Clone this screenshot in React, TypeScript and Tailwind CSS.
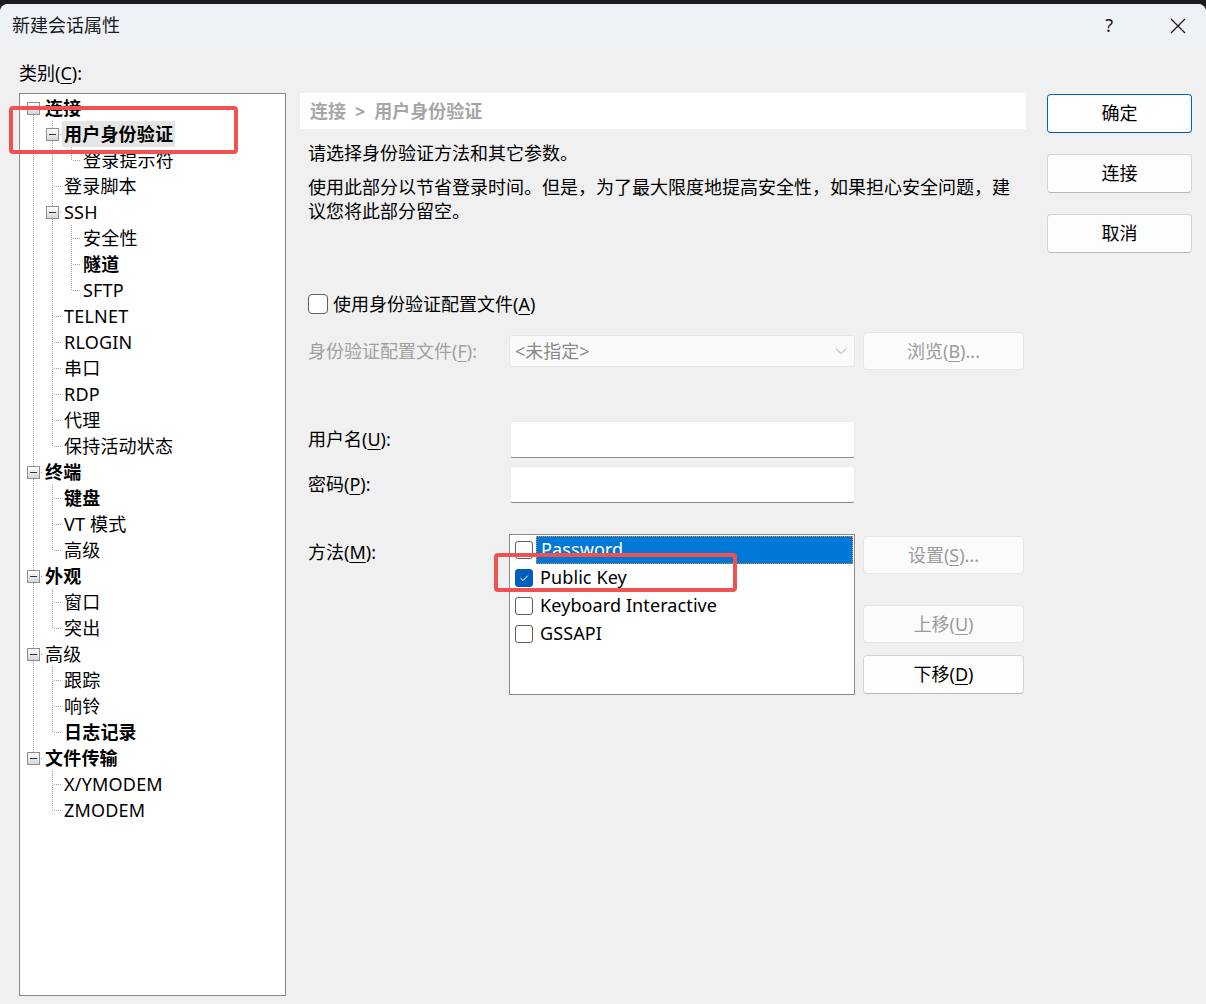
import React from 'react';

type Node = { label: string; level: number; bold?: boolean; kids?: boolean; selected?: boolean };

const tree: Node[] = [
  { label: '连接', level: 0, bold: true, kids: true },
  { label: '用户身份验证', level: 1, bold: true, kids: true, selected: true },
  { label: '登录提示符', level: 2 },
  { label: '登录脚本', level: 1 },
  { label: 'SSH', level: 1, kids: true },
  { label: '安全性', level: 2 },
  { label: '隧道', level: 2, bold: true },
  { label: 'SFTP', level: 2 },
  { label: 'TELNET', level: 1 },
  { label: 'RLOGIN', level: 1 },
  { label: '串口', level: 1 },
  { label: 'RDP', level: 1 },
  { label: '代理', level: 1 },
  { label: '保持活动状态', level: 1 },
  { label: '终端', level: 0, bold: true, kids: true },
  { label: '键盘', level: 1, bold: true },
  { label: 'VT 模式', level: 1 },
  { label: '高级', level: 1 },
  { label: '外观', level: 0, bold: true, kids: true },
  { label: '窗口', level: 1 },
  { label: '突出', level: 1 },
  { label: '高级', level: 0, kids: true },
  { label: '跟踪', level: 1 },
  { label: '响铃', level: 1 },
  { label: '日志记录', level: 1, bold: true },
  { label: '文件传输', level: 0, bold: true, kids: true },
  { label: 'X/YMODEM', level: 1 },
  { label: 'ZMODEM', level: 1 },
];

function hasNext(i: number) {
  const l = tree[i].level;
  for (let j = i + 1; j < tree.length; j++) {
    if (tree[j].level < l) return false;
    if (tree[j].level === l) return true;
  }
  return false;
}

function ancestorHasNext(i: number, k: number) {
  for (let j = i - 1; j >= 0; j--) {
    if (tree[j].level === k) return hasNext(j);
  }
  return false;
}

const DOT = { stroke: '#a0a0a0', strokeWidth: 1, strokeDasharray: '1 1' };

function Guide({ pipe }: { pipe: boolean }) {
  return (
    <svg width="19" height="26" className="shrink-0">
      {pipe && <line x1="9.5" y1="0" x2="9.5" y2="26" {...DOT} />}
    </svg>
  );
}

function Joint({ top, bottom, kids }: { top: boolean; bottom: boolean; kids?: boolean }) {
  const y1 = top ? 0 : 14;
  const y2 = bottom ? 26 : 13;
  return (
    <svg width="19" height="26" className="shrink-0">
      <defs>
        <linearGradient id="exp" x1="0" y1="0" x2="0" y2="1">
          <stop offset="0" stopColor="#ffffff" />
          <stop offset="1" stopColor="#d4d4d4" />
        </linearGradient>
      </defs>
      {(top || bottom) && <line x1="9.5" y1={y1} x2="9.5" y2={y2} {...DOT} />}
      <line x1="11" y1="13.5" x2="19" y2="13.5" {...DOT} />
      {kids && (
        <>
          <rect x="3.5" y="7.5" width="12" height="12" fill="url(#exp)" stroke="#8e8f8f" />
          <line x1="6" y1="13.5" x2="13" y2="13.5" stroke="#23344f" strokeWidth="1" />
        </>
      )}
    </svg>
  );
}

function Tree() {
  return (
    <div className="h-[903px] w-[267px] border border-[#828790] bg-white pl-[4px] pt-[1px]">
      {tree.map((n, i) => {
        const guides = [];
        for (let k = 0; k < n.level; k++) guides.push(<Guide key={k} pipe={ancestorHasNext(i, k)} />);
        return (
          <div key={i} className="flex h-[26px] items-center">
            {guides}
            <Joint top={!(n.level === 0 && i === 0)} bottom={hasNext(i)} kids={n.kids} />
            <span
              className={
                'h-[26px] px-[2px] leading-[26px] whitespace-nowrap tracking-[0.2px] ' +
                (n.bold ? 'font-bold ' : '') +
                (n.selected ? 'bg-[#e5e5e5]' : '')
              }
            >
              {n.label}
            </span>
          </div>
        );
      })}
    </div>
  );
}

function Check({ checked, big }: { checked?: boolean; big?: boolean }) {
  const size = big ? 'w-[20px] h-[20px] rounded-[4px]' : 'w-[18px] h-[18px] rounded-[3px]';
  return (
    <div
      className={
        'flex shrink-0 items-center justify-center border ' +
        size +
        (checked ? ' border-[#005fb8] bg-[#005fb8]' : ' border-[#5f5f5f] bg-white')
      }
    >
      {checked && (
        <svg width="12" height="12" viewBox="0 0 12 12">
          <path d="M2.5 6.2 L5 8.6 L9.8 3.6" fill="none" stroke="#fff" strokeWidth="1" />
        </svg>
      )}
    </div>
  );
}

function Btn({
  children,
  kind = 'normal',
  className = '',
}: {
  children: React.ReactNode;
  kind?: 'normal' | 'primary' | 'disabled';
  className?: string;
}) {
  const styles = {
    normal: 'bg-[#fdfdfd] border-[#d4d4d4] border-b-[#b8b8b8] text-black',
    primary: 'bg-white border-[#0067c0] border-b-[#0054a6] text-black',
    disabled: 'bg-[#fbfbfb] border-[#e6e6e6] text-[#9b9b9b]',
  }[kind];
  return (
    <div className={'flex items-center justify-center rounded-[4px] border ' + styles + ' ' + className}>
      {children}
    </div>
  );
}

const U = ({ c }: { c: string }) => <span className="underline underline-offset-[3px] decoration-1">{c}</span>;

export default function App() {
  return (
    <div className="h-[1004px] w-[1206px] overflow-hidden bg-[#1c1c1c] pt-[4px] font-['Noto_Sans','Noto_Sans_CJK_SC',sans-serif] text-[18px] text-black">
      <div className="relative h-[1000px] rounded-t-[8px] bg-[#f0f0f0]">
        {/* Title bar */}
        <div className="flex h-[44px] items-center justify-between rounded-t-[8px] bg-[#eef2f7] pb-[1px] pl-[12px]">
          <span className="text-[#1a1a1a]">新建会话属性</span>
          <div className="flex items-center pr-[20px]">
            <span className="text-[#1a1a1a]">?</span>
            <svg width="16" height="16" viewBox="0 0 16 16" className="ml-[57px]">
              <path d="M1 1 L15 15 M15 1 L1 15" stroke="#1a1a1a" strokeWidth="1.3" />
            </svg>
          </div>
        </div>

        {/* Body */}
        <div className="flex pl-[19px] pt-[13px]">
          <div className="w-[267px]">
            <div className="leading-[24px]">
              类别(<U c="C" />):
            </div>
            <div className="mt-[8px]">
              <Tree />
            </div>
          </div>

          <div className="ml-[14px] mt-[32px] w-[726px]">
            <div className="flex h-[36px] items-center bg-white pl-[10px] font-bold text-[#a6a6a6]">
              连接<span className="mx-[9px]">&gt;</span>用户身份验证
            </div>
            <div className="mt-[12px] pl-[8px] leading-[25px]">请选择身份验证方法和其它参数。</div>
            <div className="mt-[9px] w-[714px] pl-[8px] leading-[24px]">
              使用此部分以节省登录时间。但是，为了最大限度地提高安全性，如果担心安全问题，建议您将此部分留空。
            </div>

            <div className="mt-[69px] flex h-[24px] items-center pl-[8px]">
              <Check big />
              <span className="ml-[5px]">
                使用身份验证配置文件(<U c="A" />)
              </span>
            </div>

            <div className="mt-[16px] flex h-[38px] items-center pl-[8px]">
              <span className="w-[201px] text-[#a0a0a0]">
                身份验证配置文件(<U c="F" />):
              </span>
              <div className="flex h-[32px] w-[346px] items-center justify-between rounded-[3px] border border-[#e6e6e6] bg-[#fafafa] pl-[5px] pr-[7px] text-[#8a8a8a]">
                <span>&lt;未指定&gt;</span>
                <svg width="12" height="8" viewBox="0 0 12 8">
                  <path d="M1 1.5 L6 6.5 L11 1.5" fill="none" stroke="#a8a8a8" strokeWidth="1" />
                </svg>
              </div>
              <Btn kind="disabled" className="ml-[8px] h-[38px] w-[161px]">
                浏览(<U c="B" />)...
              </Btn>
            </div>

            <div className="mt-[51px] flex h-[37px] items-center pl-[8px]">
              <span className="w-[202px]">
                用户名(<U c="U" />):
              </span>
              <div className="h-[37px] w-[345px] rounded-[3px] border border-[#ececec] border-b-[#8a8a8a] bg-white" />
            </div>
            <div className="mt-[8px] flex h-[37px] items-center pl-[8px]">
              <span className="w-[202px]">
                密码(<U c="P" />):
              </span>
              <div className="h-[37px] w-[345px] rounded-[3px] border border-[#ececec] border-b-[#8a8a8a] bg-white" />
            </div>

            <div className="mt-[31px] flex pl-[8px]">
              <span className="w-[201px] pt-[6px] leading-[24px]">
                方法(<U c="M" />):
              </span>
              <div className="h-[161px] w-[346px] border border-[#8c8c8c] bg-white">
                {[
                  { t: 'Password', sel: true },
                  { t: 'Public Key', checked: true },
                  { t: 'Keyboard Interactive' },
                  { t: 'GSSAPI' },
                ].map((r) => (
                  <div key={r.t} className="flex h-[28px] items-center pl-[5px] pt-[1px]">
                    <Check checked={r.checked} />
                    <span
                      className={
                        'ml-[3px] mr-[1px] flex h-[28px] flex-1 items-center pl-[4px] tracking-[0.1px] ' +
                        (r.sel ? 'border border-dotted border-[#e8893a] bg-[#0078d7] pl-[3px] text-white' : '')
                      }
                    >
                      {r.t}
                    </span>
                  </div>
                ))}
              </div>
              <div className="ml-[8px] flex w-[161px] flex-col">
                <Btn kind="disabled" className="mt-[2px] h-[38px]">
                  设置(<U c="S" />)...
                </Btn>
                <Btn kind="disabled" className="mt-[31px] h-[38px]">
                  上移(<U c="U" />)
                </Btn>
                <Btn className="mt-[12px] h-[39px]">
                  下移(<U c="D" />)
                </Btn>
              </div>
            </div>
          </div>

          <div className="ml-[21px] mt-[33px] flex w-[145px] flex-col gap-[21px]">
            <Btn kind="primary" className="h-[39px]">确定</Btn>
            <Btn className="h-[39px]">连接</Btn>
            <Btn className="h-[39px]">取消</Btn>
          </div>
        </div>

        {/* Annotation boxes */}
        <div className="absolute left-[9px] top-[102px] h-[48px] w-[229px] rounded-[4px] border-[4px] border-[#f05252]" />
        <div className="absolute left-[494px] top-[549px] h-[39px] w-[243px] rounded-[4px] border-[4px] border-[#f05252]" />
      </div>
    </div>
  );
}
